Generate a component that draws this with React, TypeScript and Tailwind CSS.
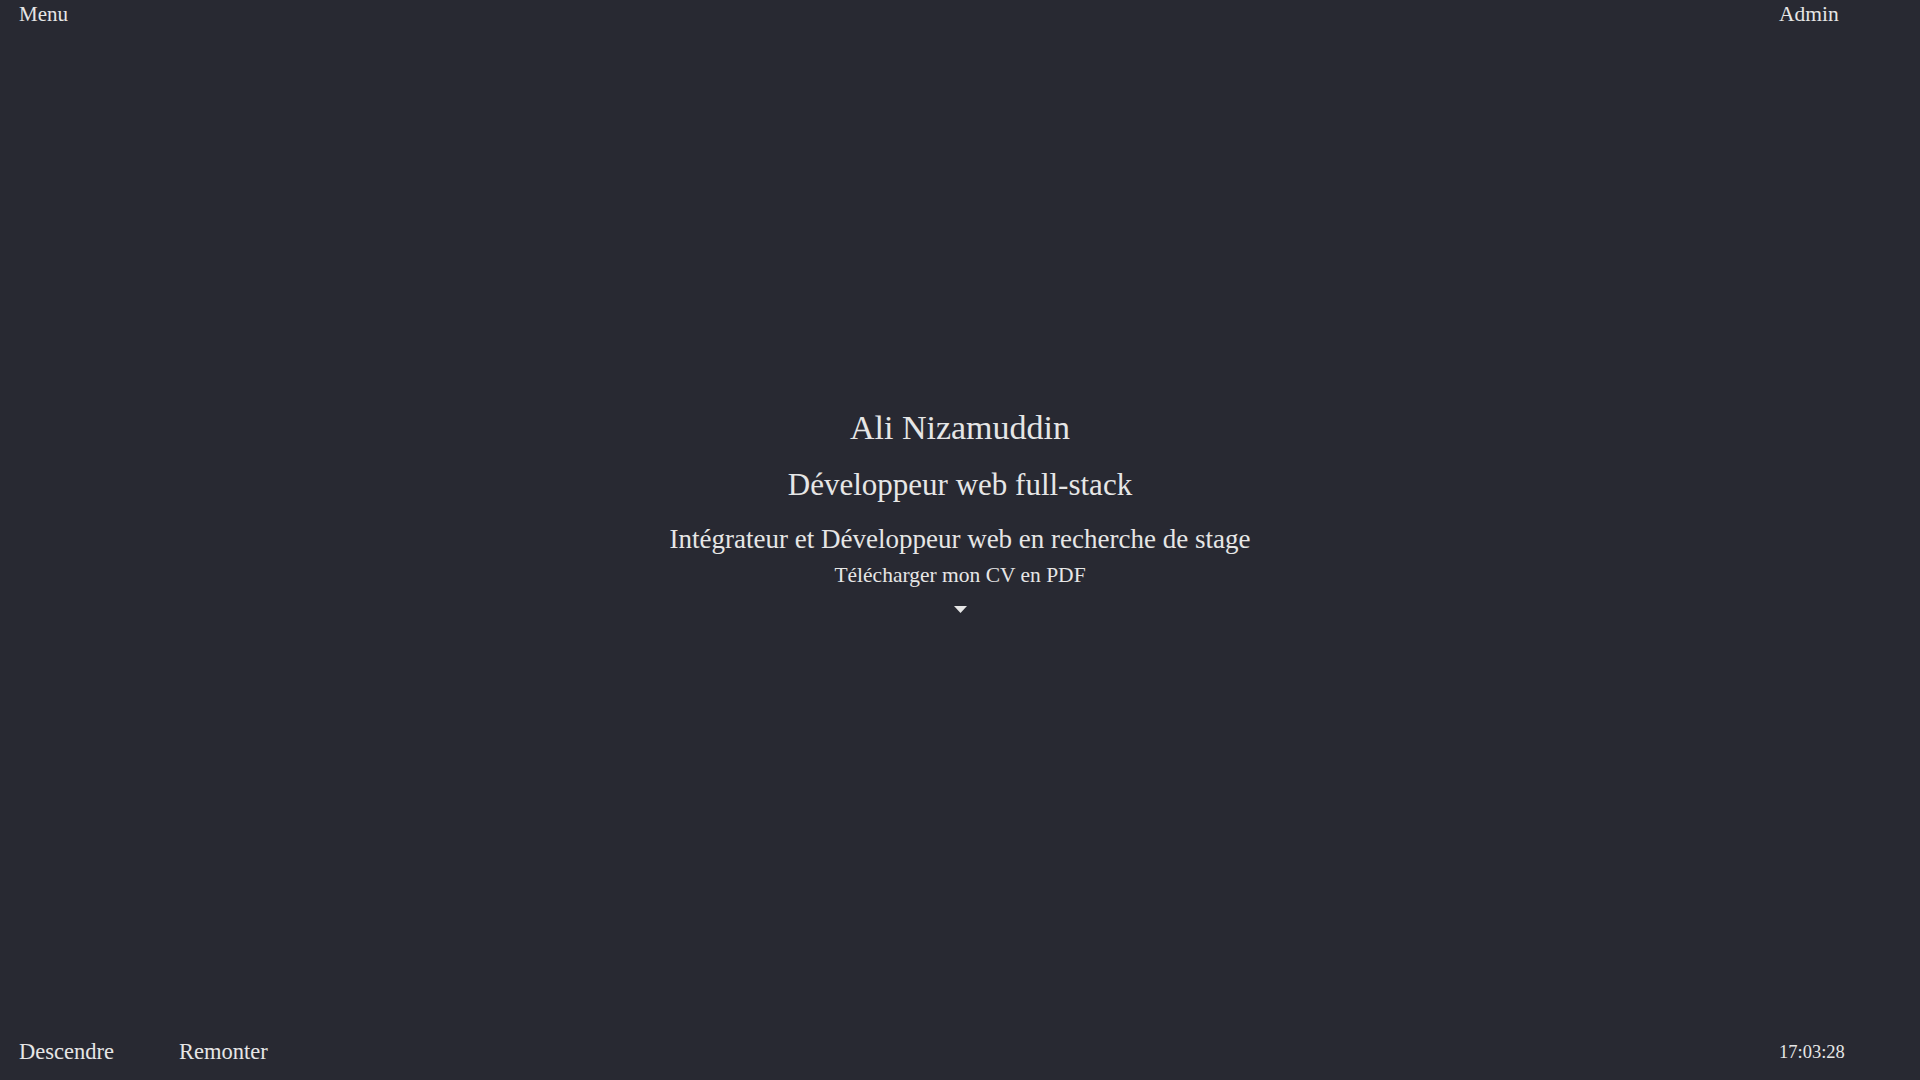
import { useEffect, useState } from 'react';

function Caret() {
  return (
    <svg width="13" height="7" viewBox="0 0 13 7" className="block">
      <path d="M0 0 L13 0 L6.5 7 Z" fill="#e6e6e6" />
    </svg>
  );
}

export default function App() {
  const [time] = useState('17:03:28');

  useEffect(() => {
    document.body.style.background = '#282932';
  }, []);

  return (
    <div
      className="h-screen w-full flex flex-col bg-[#282932] text-[#e6e6e6] overflow-hidden"
      style={{ fontFamily: '"Liberation Serif", "Times New Roman", serif' }}
    >
      {/* top bar */}
      <header className="flex justify-between items-start h-[28px]">
        <a className="pl-[19px] text-[21px] leading-[28px]">Menu</a>
        <div className="w-[141px]">
          <a className="text-[21.5px] leading-[28px]">Admin</a>
        </div>
      </header>

      {/* hero */}
      <main className="flex-1 flex flex-col items-center justify-center pb-[46px]">
        <h1 className="text-[34px] leading-[40px] font-normal">Ali Nizamuddin</h1>
        <h2 className="mt-[17px] text-[31px] leading-[40px] font-normal">Développeur web full-stack</h2>
        <p className="mt-[16px] text-[27px] leading-[36px]">
          Intégrateur et Développeur web en recherche de stage
        </p>
        <a className="mt-[4px] text-[21.5px] leading-[28px]">Télécharger mon CV en PDF</a>
        <div className="mt-[17px]">
          <Caret />
        </div>
      </main>

      {/* bottom bar */}
      <footer className="flex justify-between items-end pb-[14px]">
        <div className="flex pl-[19px] gap-[65px] text-[22.5px] leading-[28px]">
          <a>Descendre</a>
          <a>Remonter</a>
        </div>
        <div className="w-[141px] text-[18.5px] leading-[28px]">{time}</div>
      </footer>
    </div>
  );
}
